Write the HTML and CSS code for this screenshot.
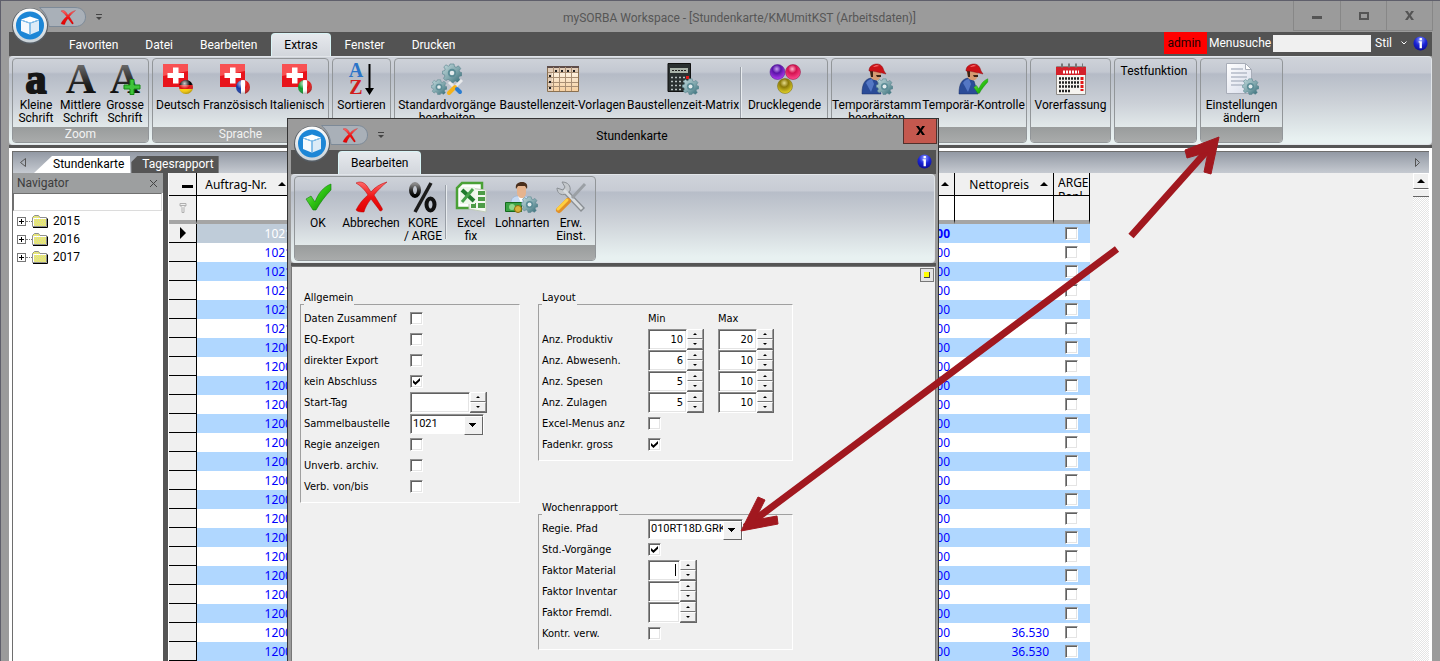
FILE: index.html
```html
<!DOCTYPE html>
<html lang="de">
<head>
<meta charset="utf-8">
<title>mySORBA Workspace</title>
<link rel="stylesheet" href="styles.css">
</head>
<body>
<svg class="defs" aria-hidden="true">
  <defs>
    <linearGradient id="gGear" x1="0" y1="0" x2="1" y2="1"><stop offset="0" stop-color="#c3dadd"/><stop offset=".55" stop-color="#7ea5ab"/><stop offset="1" stop-color="#2f6874"/></linearGradient>
    <linearGradient id="gRed" x1="0" y1="0" x2="0" y2="1"><stop offset="0" stop-color="#ff6a6a"/><stop offset=".5" stop-color="#f01414"/><stop offset="1" stop-color="#e00000"/></linearGradient>
    <linearGradient id="gInk" x1="0" y1="0" x2="0" y2="1"><stop offset="0" stop-color="#8a8a8a"/><stop offset=".6" stop-color="#222"/><stop offset="1" stop-color="#000"/></linearGradient>
    <linearGradient id="gGreen" x1="0" y1="0" x2="1" y2="1"><stop offset="0" stop-color="#8be36a"/><stop offset=".5" stop-color="#2fc413"/><stop offset="1" stop-color="#0c7a06"/></linearGradient>
    <linearGradient id="gRing" x1="0" y1="0" x2="0" y2="1"><stop offset="0" stop-color="#fff"/><stop offset="1" stop-color="#c9d2d8"/></linearGradient>
    <linearGradient id="gPage" x1="0" y1="0" x2="1" y2="1"><stop offset="0" stop-color="#fff"/><stop offset="1" stop-color="#d7dcea"/></linearGradient>
    <linearGradient id="gSheet" x1="0" y1="0" x2="0" y2="1"><stop offset="0" stop-color="#fffdf6"/><stop offset="1" stop-color="#f6cf9e"/></linearGradient>
    <radialGradient id="gViolet" cx=".45" cy=".3" r=".7"><stop offset="0" stop-color="#c9a2f2"/><stop offset=".4" stop-color="#5a14a8"/><stop offset="1" stop-color="#b03cf0"/></radialGradient>
    <radialGradient id="gPink" cx=".45" cy=".3" r=".7"><stop offset="0" stop-color="#ffb4cc"/><stop offset=".4" stop-color="#d3124f"/><stop offset="1" stop-color="#ff4a90"/></radialGradient>
    <radialGradient id="gOlive" cx=".45" cy=".3" r=".7"><stop offset="0" stop-color="#e6dc8c"/><stop offset=".4" stop-color="#8c7a08"/><stop offset="1" stop-color="#e6d62c"/></radialGradient>
    <radialGradient id="gShine" cx=".4" cy=".25" r=".8"><stop offset="0" stop-color="#fff" stop-opacity=".8"/><stop offset=".5" stop-color="#fff" stop-opacity="0"/><stop offset="1" stop-color="#000" stop-opacity=".4"/></radialGradient>
    <radialGradient id="gInfo" cx=".5" cy=".25" r=".8"><stop offset="0" stop-color="#8f9cff"/><stop offset=".5" stop-color="#1a24d8"/><stop offset="1" stop-color="#0b0b8c"/></radialGradient>
    <pattern id="pDither" width="2" height="2" patternUnits="userSpaceOnUse"><path fill="#ffff3c" d="M0 0h2v2H0z"/><path fill="#c8c8c0" d="M0 0h1v1H0zM1 1h1v1H1z"/></pattern>
    <clipPath id="ball"><circle cx="24" cy="24" r="7"/></clipPath>
  </defs>
  <symbol id="gear" viewBox="0 0 20 20">
    <path fill="url(#gGear)" stroke="#54808a" stroke-width=".6" d="M8 1h4l.5 2.6 1.6.7 2.3-1.5 2.3 2.6-1.4 2.2.5 1.4 2 .7v3l-2.4.6-.7 1.6 1.3 2.2-2.4 2.1-2.1-1.3-1.6.6L11.500 19.500h-3.200L7.700 17l-1.700-.7-2.200 1.300-2.300-2.300 1.400-2.200-.6-1.500L.4 11V8.200l2.200-.6.6-1.500-1.400-2.200 2.200-2.100 2.200 1.400 1.300-.6z"/>
    <circle cx="10" cy="10" r="4.200" fill="#5b8c96"/><circle cx="10" cy="10" r="2.300" fill="#e4ecee"/>
  </symbol>
  <symbol id="cross" viewBox="0 0 32 32">
    <path fill="url(#gRed)" stroke="#b80000" stroke-width=".5" d="M1 2c4-2 8-1 11 3l4 6c4-5 9-8 16-10-5 4-9 8-13 13l8 13c1 2 0 3-2 3-2-3-6-8-9-12-4 5-6 9-7 13-3 0-6 0-8-2 3-6 7-11 12-15C10 9 6 5 1 2z"/>
  </symbol>
  <symbol id="tick" viewBox="0 0 32 32">
    <path fill="url(#gGreen)" stroke="#0f8208" stroke-width=".6" d="M4 18l5-3 4 6C16 13 21 6 29 3l0 6C23 15 18 22 14 29h-3z"/>
  </symbol>
  <symbol id="orb" viewBox="0 0 38 38">
    <circle cx="19" cy="19" r="18" fill="#555c63"/><circle cx="19" cy="18.500" r="17" fill="url(#gRing)"/>
    <circle cx="19" cy="18.500" r="14" fill="#1c86d6"/>
    <path fill="#fff" d="M10 12.500l9-3 9 3-9 3.200z"/><path fill="#f4f9fd" d="M10 13.500l8.500 3v11L10 24z"/><path fill="#dcebf7" d="M28 13.500l-8.500 3v11L28 24z"/>
    <path fill="none" stroke="#8dc3ea" stroke-width="1" d="M19 16v12M10 13l9 3 9-3"/>
  </symbol>
  <symbol id="swiss" viewBox="0 0 32 32">
    <rect x="1" y="1" width="25" height="23" fill="#e8141c"/><path fill="#ff6b6b" opacity=".7" d="M1 1h25v7L1 13z"/>
    <path fill="#fff" d="M11 4.500h5.500V10H22v5h-5.500v5.500H11V15H5.500v-5H11z"/>
  </symbol>
  <symbol id="worker" viewBox="0 0 32 32">
    <path fill="#2b4c98" stroke="#1a2f66" stroke-width=".5" d="M1 30c0-9 3-14 9-15l6 3 4 13H1z"/><path fill="#5477c4" d="M5 20c2-3 4-4 6-4l2 5-3 8z"/>
    <path fill="#d59a72" d="M9 8c0 5 1 9 5 9 4 1 6-2 6-8z"/><path fill="#3c2417" d="M9 8h3v6h-2zM15 12h5v2h-4z"/>
    <path fill="#cc1218" stroke="#8c0a0e" stroke-width=".5" d="M8 8c0-5 4-7 8-7 4 0 6 3 7 7l2 3c-5-1-10-3-17-3z"/><path fill="#ff7878" d="M12 4c2-2 5-2 6-1-2 0-4 1-6 1z"/>
  </symbol>
  <symbol id="info" viewBox="0 0 16 16">
    <circle cx="8" cy="8" r="7.500" fill="url(#gInfo)"/><path fill="#fff" d="M7 2h2.500v2.500H7zM6 5.500h3.500V13H7V7H6z"/>
  </symbol>
  <symbol id="qat" viewBox="0 0 48 20">
    <path fill="#a9b0b8" stroke="#7d8a98" d="M.5.500H36c14 0 14 19 0 19H10C9 11 6 5 .5.500z"/>
  </symbol>
  <symbol id="folder" viewBox="0 0 16 13">
    <path fill="url(#pDither)" stroke="#909090" d="M.5 11.500v-9L2.500.500h4l1.500 2h6.500v9z"/><path fill="none" stroke="#fff" d="M1.500 11V3.500H14"/><path fill="none" stroke="#000" d="M1 12.500h14.500V3.500"/>
  </symbol>
</svg>

<div class="window">
  <header class="titlebar">
    <svg class="orb"><use href="#orb"/></svg>
    <svg class="qat"><use href="#qat"/></svg>
    <button class="qat-close" aria-label="Schliessen"><svg><use href="#cross"/></svg></button>
    <span class="qat-more"></span>
    <h1 class="title muted">mySORBA Workspace - [Stundenkarte/KMUmitKST (Arbeitsdaten)]</h1>
    <div class="winbtns">
      <button aria-label="Minimieren"><i class="ic-min"></i></button><button aria-label="Maximieren"><i class="ic-max"></i></button><button aria-label="Fenster schliessen"><svg viewBox="0 0 10 10"><path d="M0 0h3l2 3 2-3h3L6.500 5 10 10H7L5 7l-2 3H0l3.500-5z"/></svg></button>
    </div>
  </header>

  <nav class="tabs">
    <button>Favoriten</button><button>Datei</button><button>Bearbeiten</button><button class="on">Extras</button><button>Fenster</button><button>Drucken</button>
    <div class="tools">
      <span class="admin">admin</span>
      <label for="menusuche">Menusuche</label><input id="menusuche" type="text">
      <button class="stil">Stil<svg viewBox="0 0 8 6"><path d="M1.500 1.500L4 4l2.500-2.500"/></svg></button>
      <svg class="info"><use href="#info"/></svg>
    </div>
  </nav>

  <section class="ribbon">
    <div class="group">
      <div class="items g-zoom">
        <button class="item"><svg viewBox="0 0 32 32"><text x="16" y="30" class="glyph-a">a</text></svg>Kleine<br>Schrift</button>
        <button class="item"><svg viewBox="0 0 32 32"><text x="16" y="30" class="glyph-b" fill="url(#gInk)">A</text></svg>Mittlere<br>Schrift</button>
        <button class="item"><svg viewBox="0 0 32 32"><text x="16" y="30" class="glyph-b" fill="url(#gInk)">A</text><path fill="#3fc43a" stroke="#178a14" d="M21 16.500h4v5.500h6v4h-6v5.500h-4V26h-6v-4h6z"/></svg>Grosse<br>Schrift</button>
      </div>
      <div class="caption">Zoom</div>
    </div>
    <div class="group">
      <div class="items g-lang">
        <button class="item"><svg viewBox="0 0 32 32"><use href="#swiss"/><g clip-path="url(#ball)"><path d="M16 16h16v6H16z"/><path fill="#e01010" d="M16 22h16v4H16z"/><path fill="#ffd000" d="M16 26h16v6H16z"/></g><circle cx="24" cy="24" r="7" fill="url(#gShine)"/></svg>Deutsch</button>
        <button class="item"><svg viewBox="0 0 32 32"><use href="#swiss"/><g clip-path="url(#ball)"><path fill="#1438a8" d="M16 16h6v16h-6z"/><path fill="#fff" d="M22 16h4v16h-4z"/><path fill="#e01818" d="M26 16h6v16h-6z"/></g><circle cx="24" cy="24" r="7" fill="url(#gShine)"/></svg>Französisch</button>
        <button class="item"><svg viewBox="0 0 32 32"><use href="#swiss"/><g clip-path="url(#ball)"><path fill="#0c9a2c" d="M16 16h6v16h-6z"/><path fill="#fff" d="M22 16h4v16h-4z"/><path fill="#e01818" d="M26 16h6v16h-6z"/></g><circle cx="24" cy="24" r="7" fill="url(#gShine)"/></svg>Italienisch</button>
      </div>
      <div class="caption">Sprache</div>
    </div>
    <div class="group">
      <div class="items g-sort">
        <button class="item"><svg viewBox="0 0 32 32"><text x="10" y="14" class="glyph-s" fill="#2b74c8">A</text><text x="10" y="31" class="glyph-s" fill="#d01c1c">Z</text><path d="M22.500 1h2v24h3.500l-4.500 7-4.500-7h3.500z"/></svg>Sortieren</button>
      </div>
      <div class="caption"></div>
    </div>
    <div class="group">
      <div class="items g-main">
        <button class="item"><svg viewBox="0 0 32 32"><use href="#gear" x="11" y="0" width="20" height="20"/><use href="#gear" x="0" y="16" width="16" height="16"/><path stroke="#e8eaec" stroke-width="3" d="M18 19l7 7M31 17l-7 7"/><path stroke="#f5b21a" stroke-width="4" stroke-linecap="round" d="M18 30l6-6"/><path stroke="#2a7cd0" stroke-width="4" stroke-linecap="round" d="M26 26l3 3"/></svg>Standardvorgänge<br>bearbeiten</button>
        <button class="item"><svg viewBox="0 0 32 32"><path fill="url(#gSheet)" stroke="#8a7050" d="M.5 3.500h31v25H.5z"/><path fill="#5d4c49" d="M0 3h32v2H0z"/><path fill="#e2cdb8" d="M1 5h30v4H1zM1 9h4v19H1z"/><path stroke="#a98f74" d="M6.500 4v24M12.500 4v24M18.500 4v24M24.500 4v24M1 9.500h30M1 14.500h30M1 19.500h30M1 23.500h30"/><path stroke="#222" stroke-dasharray="2 4" stroke-width="2" d="M8 8h22M3 12v16"/></svg>Baustellenzeit-Vorlagen</button>
        <button class="item"><svg viewBox="0 0 32 32"><path fill="#2a3030" stroke="#111" d="M1 .500h22.500v28H1z"/><path fill="#a9b3a9" d="M3 5h18v5H3z"/><path stroke="#222" stroke-dasharray="2 1" d="M5 7.500h14"/><path stroke="#b8c0c0" stroke-width="1.500" stroke-dasharray="2 2" d="M4 14.500h15M4 18.500h15M4 22.500h12M4 26.500h11"/><path fill="#e01818" d="M19 13h3v3h-3z"/><use href="#gear" x="15" y="15" width="17" height="17"/></svg>Baustellenzeit-Matrix</button>
        <i class="sep"></i>
        <button class="item"><svg viewBox="0 0 32 32"><circle cx="8.500" cy="9" r="7.500" fill="url(#gViolet)" stroke="#47108a" stroke-width=".5"/><circle cx="24" cy="9" r="7.500" fill="url(#gPink)" stroke="#8f0c3c" stroke-width=".5"/><circle cx="16" cy="23" r="7.500" fill="url(#gOlive)" stroke="#6b5e0c" stroke-width=".5"/></svg>Drucklegende</button>
      </div>
      <div class="caption"></div>
    </div>
    <div class="group">
      <div class="items g-temp">
        <button class="item"><svg viewBox="0 0 32 32"><use href="#worker"/><use href="#gear" x="15" y="15" width="17" height="17"/></svg>Temporärstamm<br>bearbeiten</button>
        <button class="item"><svg viewBox="0 0 32 32"><use href="#worker"/><use href="#tick" x="13" y="14" width="19" height="18"/></svg>Temporär-Kontrolle</button>
      </div>
      <div class="caption"></div>
    </div>
    <div class="group">
      <div class="items g-vor">
        <button class="item"><svg viewBox="0 0 32 32"><path fill="#f6f4f0" stroke="#8d8a86" d="M1.500 3.500h29v28h-29z"/><path fill="#d4202a" d="M1 4h30v8H1z"/><path stroke="#fff" stroke-width="3" stroke-dasharray="2 1" d="M8 9h16"/><path stroke="#777" stroke-width="4" stroke-dasharray="2 5" d="M6 2.500h22"/><path stroke="#222" stroke-width="2.500" stroke-dasharray="2 1" d="M4 15.500h21M4 19.500h21M4 23.500h21M4 28h11"/><path stroke="#e01818" stroke-width="3" stroke-dasharray="3 1" d="M27 14v14"/></svg>Vorerfassung</button>
      </div>
      <div class="caption"></div>
    </div>
    <div class="group">
      <div class="items g-test"><button class="item">Testfunktion</button></div>
      <div class="caption"></div>
    </div>
    <div class="group">
      <div class="items g-set">
        <button class="item"><svg viewBox="0 0 32 32"><path fill="url(#gPage)" stroke="#a8adb8" d="M.5.500h19l6 6v24H.5z"/><path fill="#fff" stroke="#a8adb8" d="M19.500.500v6h6z"/><path stroke="#b4bac8" stroke-width="1.500" d="M5 6h12M5 10h16M5 14h16M5 18h14M5 22h11"/><use href="#gear" x="16" y="15" width="17" height="17"/></svg>Einstellungen<br>ändern</button>
      </div>
      <div class="caption"></div>
    </div>
  </section>

  <main class="client">
    <div class="doctabs">
      <svg class="nav-l" viewBox="0 0 6 10"><path d="M5.500.500v8l-5-4z"/></svg>
      <button class="doctab on">Stundenkarte</button><button class="doctab">Tagesrapport</button>
      <svg class="nav-r" viewBox="0 0 6 10"><path d="M.5.500v8l4-4z"/></svg>
    </div>
    <div class="split">
      <aside class="navigator">
        <div class="nav-head">Navigator<button aria-label="Navigator schliessen"><svg viewBox="0 0 9 9"><path d="M1 1l7 7M8 1L1 8"/></svg></button></div>
        <input class="nav-search" type="text" aria-label="Suche">
        <ul class="tree">
          <li><button class="plus" aria-label="öffnen"></button><i></i><svg><use href="#folder"/></svg><span>2015</span></li>
          <li><button class="plus" aria-label="öffnen"></button><i></i><svg><use href="#folder"/></svg><span>2016</span></li>
          <li><button class="plus" aria-label="öffnen"></button><i></i><svg><use href="#folder"/></svg><span>2017</span></li>
        </ul>
      </aside>
      <div class="gridarea">
        <table class="grid">
          <colgroup><col class="c-ind"><col class="c-nr"><col class="c-mid"><col class="c-net"><col class="c-arge"></colgroup>
          <thead>
            <tr class="head"><th><i class="minus"></i></th><th>Auftrag-Nr. <i class="up"></i></th><th><i class="up"></i></th><th>Nettopreis <i class="up"></i></th><th class="two"><div>ARGE<br>Rapl.</div></th></tr>
            <tr class="filter"><td><svg viewBox="0 0 8 10"><path d="M1 .500h6v2L5 4.500v5H3v-5L1 2.500zM1 2.500h6"/></svg></td><td></td><td></td><td></td><td></td></tr>
          </thead>
          <tbody>
            <tr class="cur"><td><i class="play"></i></td><td>1021</td><td>00</td><td></td><td><input type="checkbox" aria-label="ARGE"></td></tr>
            <tr><td></td><td>1021</td><td>00</td><td></td><td><input type="checkbox" aria-label="ARGE"></td></tr>
            <tr><td></td><td>1021</td><td>00</td><td></td><td><input type="checkbox" aria-label="ARGE"></td></tr>
            <tr><td></td><td>1021</td><td>00</td><td></td><td><input type="checkbox" aria-label="ARGE"></td></tr>
            <tr><td></td><td>1021</td><td>00</td><td></td><td><input type="checkbox" aria-label="ARGE"></td></tr>
            <tr><td></td><td>1021</td><td>00</td><td></td><td><input type="checkbox" aria-label="ARGE"></td></tr>
            <tr><td></td><td>1200</td><td>00</td><td></td><td><input type="checkbox" aria-label="ARGE"></td></tr>
            <tr><td></td><td>1200</td><td>00</td><td></td><td><input type="checkbox" aria-label="ARGE"></td></tr>
            <tr><td></td><td>1200</td><td>00</td><td></td><td><input type="checkbox" aria-label="ARGE"></td></tr>
            <tr><td></td><td>1200</td><td>00</td><td></td><td><input type="checkbox" aria-label="ARGE"></td></tr>
            <tr><td></td><td>1200</td><td>00</td><td></td><td><input type="checkbox" aria-label="ARGE"></td></tr>
            <tr><td></td><td>1200</td><td>00</td><td></td><td><input type="checkbox" aria-label="ARGE"></td></tr>
            <tr><td></td><td>1200</td><td>00</td><td></td><td><input type="checkbox" aria-label="ARGE"></td></tr>
            <tr><td></td><td>1200</td><td>00</td><td></td><td><input type="checkbox" aria-label="ARGE"></td></tr>
            <tr><td></td><td>1200</td><td>00</td><td></td><td><input type="checkbox" aria-label="ARGE"></td></tr>
            <tr><td></td><td>1200</td><td>00</td><td></td><td><input type="checkbox" aria-label="ARGE"></td></tr>
            <tr><td></td><td>1200</td><td>00</td><td></td><td><input type="checkbox" aria-label="ARGE"></td></tr>
            <tr><td></td><td>1200</td><td>00</td><td></td><td><input type="checkbox" aria-label="ARGE"></td></tr>
            <tr><td></td><td>1200</td><td>00</td><td></td><td><input type="checkbox" aria-label="ARGE"></td></tr>
            <tr><td></td><td>1200</td><td>00</td><td></td><td><input type="checkbox" aria-label="ARGE"></td></tr>
            <tr><td></td><td>1200</td><td>00</td><td></td><td><input type="checkbox" aria-label="ARGE"></td></tr>
            <tr><td></td><td>1200</td><td>00</td><td>36.530</td><td><input type="checkbox" aria-label="ARGE"></td></tr>
            <tr><td></td><td>1200</td><td>00</td><td>36.530</td><td><input type="checkbox" aria-label="ARGE"></td></tr>
          </tbody>
        </table>
        <div class="scroll"><button aria-label="nach oben"><i class="up"></i></button><div class="thumb"></div></div>
      </div>
    </div>
  </main>
</div>

<div class="dialog" role="dialog" aria-label="Stundenkarte">
  <header class="titlebar">
    <svg class="orb"><use href="#orb"/></svg>
    <svg class="qat"><use href="#qat"/></svg>
    <button class="qat-close" aria-label="Schliessen"><svg><use href="#cross"/></svg></button>
    <span class="qat-more"></span>
    <h2 class="title">Stundenkarte</h2>
    <button class="dlg-close" aria-label="Dialog schliessen"><svg viewBox="0 0 10 10"><path d="M0 0h3l2 3 2-3h3L6.500 5 10 10H7L5 7l-2 3H0l3.500-5z"/></svg></button>
  </header>
  <nav class="tabs"><button class="on">Bearbeiten</button><div class="tools"><svg class="info"><use href="#info"/></svg></div></nav>
  <section class="ribbon">
    <div class="group">
      <div class="items g-dlg">
        <button class="item"><svg viewBox="0 0 32 32"><use href="#tick"/></svg>OK</button>
        <button class="item"><svg viewBox="0 0 32 32"><use href="#cross"/></svg>Abbrechen</button>
        <button class="item"><svg viewBox="0 0 32 32"><path stroke="#1c1c1c" stroke-width="3.500" d="M24 2L8 31"/><g fill="none" stroke="url(#gInk)" stroke-width="4"><ellipse cx="8" cy="9" rx="4" ry="6"/><ellipse cx="23.500" cy="23.500" rx="4" ry="6" stroke="#111"/></g></svg>KORE<br>/ ARGE</button>
        <i class="sep"></i>
        <button class="item"><svg viewBox="0 0 32 32"><path fill="#fff" stroke="#4aa136" stroke-width="2.500" d="M7 2h20v25L2 27V7z"/><path fill="#f3f8f0" stroke="#c0ccb8" d="M14 7l17 2v22l-17-3z"/><path fill="#4d9c46" d="M23 10h7v4h-7zM23 16h7v4h-7zM16 22h5v5h-5zM23 22h7v5h-7z"/><path fill="#eef7ea" d="M5 6h15v17H5z"/><path stroke="#1f7a2c" stroke-width="4" d="M7 9l12 11"/><path stroke="#45a049" stroke-width="3" d="M18 8L7 21"/></svg>Excel<br>fix</button>
        <button class="item"><svg viewBox="0 0 32 32"><path fill="#c4d8f2" stroke="#8aa8d0" stroke-width=".5" d="M6 22c0-5 3-7 7-7h6c4 0 6 2 6 6v3H6z"/><path fill="#fff" d="M13 15h6l-3 7z"/><path fill="#e6b48e" d="M12 5h9v6c0 4-2 6-4 6-3 0-5-2-5-6z"/><path fill="#4a2f1c" d="M11 8c-1-5 2-7 6-7s6 2 5 7l-2-3h-7z"/><path fill="#3ba344" stroke="#146a1c" d="M.5 21.500h16v9H.5z"/><circle cx="7" cy="26" r="3" fill="#8fd68a"/><circle cx="13" cy="28" r="3.500" fill="#d8b23a" stroke="#8a6a10"/><use href="#gear" x="16" y="15" width="17" height="17"/></svg>Lohnarten</button>
        <button class="item"><svg viewBox="0 0 32 32"><path fill="none" stroke="#8a8f94" stroke-width="5.500" d="M9 9l19 20"/><path fill="#c4c8cc" stroke="#8a8f94" d="M7 1l3 5-2 3-6-2c0 5 4 8 9 6l4-3c1-5-2-9-8-9z"/><path stroke="#d8dcdf" stroke-width="3" d="M9 9l18 19"/><path stroke="#9ba0a5" stroke-width="3" d="M30 3L17 17"/><path stroke="#e0902a" stroke-width="6" stroke-linecap="round" d="M4 29l9-9"/><path stroke="#ffd040" stroke-width="3" stroke-linecap="round" d="M3 28l9-9"/></svg>Erw.<br>Einst.</button>
      </div>
      <div class="caption"></div>
    </div>
  </section>
  <form class="panel">
    <button type="button" class="pin" aria-label="Anheften"><i></i></button>
    <div class="cols">
      <fieldset class="f-all">
        <legend>Allgemein</legend>
        <div class="rows">
          <label for="a1">Daten Zusammenf</label><input id="a1" type="checkbox">
          <label for="a2">EQ-Export</label><input id="a2" type="checkbox">
          <label for="a3">direkter Export</label><input id="a3" type="checkbox">
          <label for="a4">kein Abschluss</label><input id="a4" type="checkbox" checked>
          <label for="a5">Start-Tag</label><span class="spin wide"><input id="a5" type="text"><span><button type="button" aria-label="mehr"></button><button type="button" aria-label="weniger"></button></span></span>
          <label for="a6">Sammelbaustelle</label><span class="drop narrow"><select id="a6"><option>1021</option></select></span>
          <label for="a7">Regie anzeigen</label><input id="a7" type="checkbox">
          <label for="a8">Unverb. archiv.</label><input id="a8" type="checkbox">
          <label for="a9">Verb. von/bis</label><input id="a9" type="checkbox">
        </div>
      </fieldset>
      <div class="right">
        <fieldset>
          <legend>Layout</legend>
          <div class="rows three">
            <span></span><span>Min</span><span>Max</span>
            <label for="l1">Anz. Produktiv</label><span class="spin"><input id="l1" type="text" value="10"><span><button type="button" aria-label="mehr"></button><button type="button" aria-label="weniger"></button></span></span><span class="spin"><input type="text" aria-label="Produktiv Max" value="20"><span><button type="button" aria-label="mehr"></button><button type="button" aria-label="weniger"></button></span></span>
            <label for="l2">Anz. Abwesenh.</label><span class="spin"><input id="l2" type="text" value="6"><span><button type="button" aria-label="mehr"></button><button type="button" aria-label="weniger"></button></span></span><span class="spin"><input type="text" aria-label="Abwesenheit Max" value="10"><span><button type="button" aria-label="mehr"></button><button type="button" aria-label="weniger"></button></span></span>
            <label for="l3">Anz. Spesen</label><span class="spin"><input id="l3" type="text" value="5"><span><button type="button" aria-label="mehr"></button><button type="button" aria-label="weniger"></button></span></span><span class="spin"><input type="text" aria-label="Spesen Max" value="10"><span><button type="button" aria-label="mehr"></button><button type="button" aria-label="weniger"></button></span></span>
            <label for="l4">Anz. Zulagen</label><span class="spin"><input id="l4" type="text" value="5"><span><button type="button" aria-label="mehr"></button><button type="button" aria-label="weniger"></button></span></span><span class="spin"><input type="text" aria-label="Zulagen Max" value="10"><span><button type="button" aria-label="mehr"></button><button type="button" aria-label="weniger"></button></span></span>
            <label for="l5">Excel-Menus anz</label><input id="l5" type="checkbox"><span></span>
            <label for="l6">Fadenkr. gross</label><input id="l6" type="checkbox" checked><span></span>
          </div>
        </fieldset>
        <fieldset>
          <legend>Wochenrapport</legend>
          <div class="rows">
            <label for="w1">Regie. Pfad</label><span class="drop"><select id="w1"><option>010RT18D.GRK</option></select></span>
            <label for="w2">Std.-Vorgänge</label><input id="w2" type="checkbox" checked>
            <label for="w3">Faktor Material</label><span class="spin small"><input id="w3" type="text"><i class="caret"></i><span><button type="button" aria-label="mehr"></button><button type="button" aria-label="weniger"></button></span></span>
            <label for="w4">Faktor Inventar</label><span class="spin small"><input id="w4" type="text"><span><button type="button" aria-label="mehr"></button><button type="button" aria-label="weniger"></button></span></span>
            <label for="w5">Faktor Fremdl.</label><span class="spin small"><input id="w5" type="text"><span><button type="button" aria-label="mehr"></button><button type="button" aria-label="weniger"></button></span></span>
            <label for="w6">Kontr. verw.</label><input id="w6" type="checkbox">
          </div>
        </fieldset>
      </div>
    </div>
  </form>
</div>

<svg class="arrows" viewBox="0 0 1440 661" aria-hidden="true">
  <path d="M745 527L1117 249M1131 236L1214 143"/>
  <path class="tip" d="M741 531l17-34 7 3-10 20 22-4 1 8z"/>
  <path class="tip" d="M1219 137l-34 13 2 8 21-6-4 20 7 2z"/>
</svg>
</body>
</html>
```
FILE: styles.css
```css
* { box-sizing: border-box; }
body { margin: 0; overflow: hidden; background: #9b9b9b; color: #000; font: 12px/13px Roboto, "Open Sans", sans-serif; }
button, input, select { font: inherit; color: inherit; margin: 0; padding: 0; border: 0; border-radius: 0; background: none; }
h1, h2, ul, fieldset, legend { margin: 0; padding: 0; }
.defs { position: absolute; width: 0; height: 0; }

/* window frame */
.window { height: 100vh; display: flex; flex-direction: column; padding: 0 8px; border-top: 1px solid #5f5f6b; border-left: 1px solid #5f5f6b; background: #9b9b9b; }
.titlebar { position: relative; height: 31px; flex: none; display: flex; align-items: center; justify-content: center; padding-left: 38px; }
.title { font-size: 12px; font-weight: 400; padding-top: 3px; }
.muted { color: #565656; }
.orb { position: absolute; left: 2px; top: 6px; width: 38px; height: 38px; z-index: 3; }
.qat { position: absolute; left: 30px; top: 6px; width: 48px; height: 20px; }
.qat-close { position: absolute; left: 51px; top: 9px; width: 16px; height: 15px; z-index: 2; }
.qat-close svg { display: block; width: 16px; height: 15px; }
.qat-more { position: absolute; left: 87px; top: 13px; width: 6px; height: 7px; border-top: 1px solid #444; }
.qat-more::after { content: ""; position: absolute; left: 0; top: 2px; border: 3px solid transparent; border-top-color: #444; border-bottom: 0; }
.winbtns { position: absolute; right: -1px; top: 0; height: 30px; display: flex; border: 1px solid #878787; border-top: 0; }
.winbtns button { width: 46px; display: flex; align-items: center; justify-content: center; }
.winbtns button + button { border-left: 1px solid #878787; }
.ic-min { width: 10px; height: 3px; margin-top: 4px; background: #555; }
.ic-max { width: 10px; height: 8px; border: 2px solid #555; }
.winbtns svg, .dlg-close svg { width: 9px; height: 9px; fill: #555; }

/* tab bar */
.tabs { flex: none; height: 24px; display: flex; align-items: flex-end; gap: 1px; padding-left: 47px; background: #535353; color: #fff; }
.tabs > button { height: 23px; padding: 1px 13px 0; border-radius: 4px 4px 0 0; }
.tabs > .on { color: #000; background: linear-gradient(#e6e9ed, #d2d6dc); border: 1px solid #d9f4f6; border-bottom: 0; padding: 0 12px; }
.tools { margin-left: auto; align-self: stretch; display: flex; align-items: center; gap: 2px; padding-right: 4px; }
.tools label { padding-bottom: 2px; }
.tools input { width: 98px; height: 17px; background: #f0f0f0; margin-bottom: 2px; }
.admin { align-self: flex-start; height: 22px; padding: 5px 6px 0 4px; background: #f00; color: #200; }
.stil { display: flex; align-items: center; gap: 8px; padding: 0 3px 2px 2px; }
.stil svg { width: 8px; height: 6px; fill: none; stroke: #fff; }
.info { width: 15px; height: 15px; margin-bottom: 2px; }

/* ribbon */
.ribbon { flex: none; display: flex; gap: 3px; padding: 1px 3px; border: solid #e1e5e9; border-width: 1px 1px 1px 0; border-radius: 4px; background: linear-gradient(#cfd3da 0, #c7cbd4 16px, #b7bdc8 17px, #ccd1d7 45px, #e8f1f1 82px); }
.group { border: 1px solid #929699; border-radius: 4px; background: linear-gradient(#ced2d9 0, #c3c8d1 13px, #b5bbc6 15px, #cbd0d7 44px, #e2e9ea 68px); }
.items { display: grid; height: 68px; }
.item { display: block; padding: 4px 0 0; text-align: center; white-space: nowrap; align-self: start; line-height: 13px; }
.item svg { display: block; width: 32px; height: 32px; margin: 0 auto 4px; overflow: visible; }
.caption { height: 15px; border-radius: 0 0 3px 3px; text-align: center; line-height: 15px; color: #f2f2f2; background: linear-gradient(#999c9c, #a9abab); }
.sep { width: 2px; height: 54px; margin-top: 8px; background: #989ea6; border-right: 1px solid #e8ecef; }
.g-zoom { grid-template-columns: 46px 43px 46px; }
.g-lang { grid-template-columns: 50px 63px 62px; }
.g-sort { grid-template-columns: 57px; }
.g-main { grid-template-columns: 104px 127px 114px 2px 85px; }
.g-temp { grid-template-columns: 89px 105px; }
.g-vor { grid-template-columns: 79px; }
.g-test { grid-template-columns: 81px; }
.g-set { grid-template-columns: 81px; }
.g-test .item { padding-right: 3px; padding-top: 6px; }
.g-dlg { grid-template-columns: 46px 60px 44px 2px 48px 52px 48px; }
.glyph-a { font: bold 42px "Liberation Serif", serif; text-anchor: middle; fill: #161616; stroke: #161616; stroke-width: 2; }
.glyph-b { font: bold 42px "Liberation Serif", serif; text-anchor: middle; }
.glyph-s { font: bold 20px "Liberation Serif", serif; text-anchor: middle; }

/* document area */
.client { flex: 1; min-height: 0; display: flex; flex-direction: column; margin-top: 3px; padding: 2px 3px 0 2px; border: solid #fff; border-width: 1px 0 0 1px; background: #fff; box-shadow: 0 -3px #555; }
.doctabs { flex: none; display: flex; align-items: flex-end; height: 22px; padding-left: 7px; border-top: 1px solid #6e6e6e; border-left: 1px solid #6e6e6e; background: linear-gradient(#9299a4, #c6cad1); }
.nav-l, .nav-r { width: 6px; height: 10px; fill: none; stroke: #555; align-self: center; }
.nav-r { margin: 0 8px 0 auto; }
.doctab { height: 17px; padding: 0 6px 0 19px; }
.doctab.on { margin-left: 8px; background: #fff; clip-path: polygon(18px 0, 100% 0, 100% 100%, 0 100%); }
.doctab:not(.on) { margin-left: 1px; padding: 0 5px 0 11px; background: #555; color: #fff; clip-path: polygon(6px 0, 100% 0, 100% 100%, 0 100%, 0 6px); }
.split { flex: 1; min-height: 0; display: flex; border-left: 1px solid #6e6e6e; }
.navigator { flex: none; width: 150px; }
.nav-head { display: flex; align-items: center; justify-content: space-between; height: 20px; padding: 0 5px 0 4px; background: #9d9fa0; color: #3c3c3c; }
.nav-head svg { display: block; width: 9px; height: 9px; stroke: #444; }
.nav-search { display: block; width: 149px; height: 18px; border: 1px solid #dcdcdc; border-top-color: #707070; border-left-color: #707070; background: #fff; }
.tree { list-style: none; padding-top: 1px; }
.tree li { display: flex; align-items: center; height: 18px; padding-left: 4px; }
.tree i { width: 6px; border-top: 1px dotted #777; }
.tree svg { width: 16px; height: 13px; margin-right: 5px; }
.plus { width: 9px; height: 9px; border: 1px solid #777; background: linear-gradient(#000, #000) center / 5px 1px no-repeat, linear-gradient(#000, #000) center / 1px 5px no-repeat, #fff; }
.gridarea { flex: 1; min-width: 0; display: flex; justify-content: space-between; border-left: 5px solid #555; background: #f0f0f0; overflow: hidden; }

/* data grid */
.grid { flex: none; align-self: flex-start; table-layout: fixed; width: 922px; border-collapse: separate; border-spacing: 0; border-left: 1px solid #fff; font: 12px/13px "Noto Sans", sans-serif; }
.c-ind { width: 28px; } .c-nr { width: 95px; } .c-mid { width: 663px; } .c-net { width: 99px; } .c-arge { width: 36px; }
.grid th, .grid td { padding: 0; height: 19px; overflow: hidden; white-space: nowrap; }
.grid .head th { height: 23px; font-weight: 400; background: #f0f0f0; border-right: 1px solid #000; border-bottom: 1px solid #000; text-align: right; padding-right: 5px; }
.grid .head .two { padding: 0 0 0 4px; text-align: left; }
.two div { height: 22px; padding-top: 3px; overflow: hidden; line-height: 14px; }
.grid .filter td { height: 28px; border-right: 1px solid #000; border-bottom: 4px solid #a5a5a5; background: #fff; text-align: center; }
.grid .filter td:first-child, .grid .filter td:last-child { background: #f0f0f0; }
.filter svg { display: block; width: 8px; height: 10px; margin: 0 auto; fill: none; stroke: #b0b0b0; }
.up { display: inline-block; margin-left: 8px; border: 4px solid transparent; border-top: 0; border-bottom: 4px solid #000; vertical-align: 3px; }
.minus { display: inline-block; width: 11px; height: 3px; background: #000; margin-right: -2px; vertical-align: 1px; }
.play { display: block; width: 6px; margin-left: 11px; border: 6px solid transparent; border-left-color: #000; border-right: 0; }
.grid tbody td { color: #00f; text-align: right; background: #fff; }
.grid tbody tr:nth-child(odd) td { background: #b0d7ff; }
.grid tbody td:first-child, .grid tbody tr:nth-child(odd) td:first-child { background: #f0f0f0; border-right: 1px solid #000; border-bottom: 1px solid #000; }
.grid tbody td:nth-child(3), .grid tbody td:nth-child(4) { padding-right: 5px; }
.grid tbody .cur td:nth-child(2) { background: #bfccd9; color: #fff; }
.cur td:nth-child(3) { font-weight: 700; }
.grid td input { display: block; margin: 0 11px; }
.scroll { flex: none; width: 16px; background: repeating-conic-gradient(#e4e4e4 0 25%, #fff 0 50%) 0 0 / 2px 2px; }
.scroll button { display: flex; align-items: center; justify-content: center; width: 16px; height: 16px; background: #f0f0f0; border: 1px solid #fff; border-bottom-color: #666; }
.scroll .up { margin: 0; }
.thumb { height: 8px; background: #f0f0f0; border-top: 1px solid #fff; border-bottom: 1px solid #666; }

/* classic tick box */
input[type="checkbox"] { appearance: none; width: 13px; height: 13px; background: #fff; border: 1px solid #fff; border-top-color: #909090; border-left-color: #909090; box-shadow: inset 1px 1px #606060, inset -1px -1px #e4e4e4; }
input[type="checkbox"]:checked::before { content: ""; display: block; width: 7px; height: 7px; margin: 2px; background: #000; clip-path: polygon(0 28%, 35% 60%, 100% 0, 100% 40%, 35% 100%, 0 68%); }

/* dialog */
.dialog { position: absolute; left: 287px; top: 118px; bottom: 0; width: 652px; display: flex; flex-direction: column; padding: 0 2px 0 3px; background: #9b9b9b; border: 1px solid #333; border-bottom: 0; }
.dialog .titlebar { margin-right: -2px; margin-left: -3px; }
.dialog .orb { left: 5px; }
.dialog .qat { left: 33px; }
.dialog .qat-close { left: 54px; }
.dialog .qat-more { left: 90px; }
.dlg-close { position: absolute; right: 1px; top: 0; width: 34px; height: 25px; background: #c4584e; border: 1px solid #51302c; border-top: 0; }
.dlg-close svg { fill: #000; }
.dialog .ribbon { margin-right: 1px; }
.panel { position: relative; flex: 1; min-height: 0; margin-top: 3px; padding: 24px 0 0 8px; border: 1px solid #777; border-bottom: 0; background: #f0f0f0; box-shadow: 0 -3px #555; font: 11px/14px "DejaVu Sans Condensed", "Noto Sans", sans-serif; }
.pin { position: absolute; right: 1px; top: 1px; width: 14px; height: 14px; background: #e4e4e4; border: 1px solid #777; }
.pin i { display: block; width: 6px; height: 6px; margin: 3px; background: #ff0; border: solid #444; border-width: 0 1px 1px 0; }
.cols { display: flex; align-items: flex-start; gap: 18px; }
.right { width: 255px; display: flex; flex-direction: column; gap: 40px; }
fieldset { min-width: 0; border: 1px solid; border-color: #a0a0a0 #fff #fff #a0a0a0; }
.f-all { width: 220px; }
legend { height: 26px; margin-left: 3px; padding-right: 1px; }
.rows { display: grid; grid-template-columns: 106px auto; grid-auto-rows: 21px; align-items: center; justify-items: start; margin-top: -9px; padding: 0 0 5px 3px; }
.rows.three { grid-template-columns: 106px 70px auto; }
.spin { position: relative; display: flex; height: 21px; }
.spin input { width: 39px; height: 21px; padding-right: 3px; text-align: right; background: #fff; border: 1px solid #fff; border-top-color: #909090; border-left-color: #909090; box-shadow: inset 1px 1px #606060, inset -1px -1px #e4e4e4; }
.spin.wide input { width: 60px; }
.spin.small input { width: 32px; }
.spin > span { display: flex; flex-direction: column; width: 17px; border: solid #666; border-width: 0 1px 1px 0; }
.spin button { flex: 1; background: #f0f0f0; border: 1px solid #fff; border-right-color: #999; border-bottom-color: #777; display: flex; align-items: center; justify-content: center; }
.spin button::before { content: ""; border: 2px solid transparent; border-top: 0; border-bottom-color: #000; }
.spin button + button::before { border: 2px solid transparent; border-bottom: 0; border-top-color: #000; }
.caret { position: absolute; left: 27px; top: 4px; width: 1px; height: 12px; background: #000; }
.drop { position: relative; display: block; width: 95px; height: 20px; }
.drop.narrow { width: 74px; }
.drop select { appearance: none; width: 100%; height: 20px; padding: 0 16px 0 2px; font-family: Roboto, "Open Sans", sans-serif; background: #fff; border: 1px solid #fff; border-top-color: #909090; border-left-color: #909090; box-shadow: inset 1px 1px #606060; overflow: hidden; }
.drop::after { content: ""; position: absolute; right: 1px; top: 2px; width: 17px; height: 17px; border: 1px solid #fff; border-right-color: #666; border-bottom-color: #666; background: linear-gradient(#000, #000) 4px 6px / 7px 1px no-repeat, linear-gradient(#000, #000) 5px 7px / 5px 1px no-repeat, linear-gradient(#000, #000) 6px 8px / 3px 1px no-repeat, linear-gradient(#000, #000) 7px 9px / 1px 1px no-repeat, #f0f0f0; pointer-events: none; }

.arrows { position: absolute; left: 0; top: 0; width: 1440px; height: 661px; pointer-events: none; fill: none; stroke: #a1181f; stroke-width: 7; }
.arrows .tip { fill: #a1181f; stroke-width: 1; }
```
